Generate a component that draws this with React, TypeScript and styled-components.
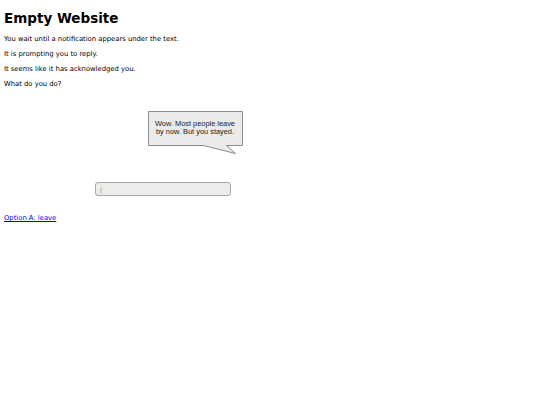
import React from "react";
import styled, { createGlobalStyle } from "styled-components";

const Global = createGlobalStyle`
  html, body { margin: 0; padding: 0; background: #ffffff; }
  body { font-family: "DejaVu Sans", Verdana, sans-serif; color: #000; }
`;

const Page = styled.div`
  padding: 4px 4px;
  display: flex;
  flex-direction: column;
`;

const Title = styled.h1`
  font-family: "DejaVu Sans", Verdana, sans-serif;
  font-weight: bold;
  font-size: 13.5px;
  line-height: 18px;
  margin: 5px 0 8px 0;
`;

const Line = styled.p`
  font-size: 6.8px;
  line-height: 8px;
  margin: 0 0 7px 0;
`;

const BubbleWrap = styled.div`
  margin: 16px 0 0 144px;
  width: 95px;
  height: 43px;
  position: relative;
`;

const BubbleBox = styled.div`
  position: relative;
  z-index: 1;
  width: 94px;
  height: 34px;
  box-sizing: border-box;
  display: flex;
  align-items: center;
  justify-content: center;
  text-align: center;
  font-family: "Liberation Sans", Arial, sans-serif;
  font-size: 7.4px;
  line-height: 8.5px;
  color: #1a1a1a;
  padding: 0 4px;
`;

const Tail = styled.svg`
  position: absolute;
  left: 0;
  top: 0;
`;

const InputField = styled.div`
  margin: 28px 0 0 91px;
  width: 136px;
  height: 14px;
  box-sizing: border-box;
  border: 1px solid #a8a8a8;
  border-radius: 3px;
  background: #ececec;
  display: flex;
  align-items: center;
  padding-left: 4px;
  font-size: 6px;
  color: #777;
`;

const Link = styled.a`
  margin-top: 18px;
  font-size: 6.8px;
  line-height: 8px;
  color: #0000ee;
  text-decoration: underline;
  align-self: flex-start;
`;

export default function App() {
  return (
    <>
      <Global />
      <Page>
        <Title>Empty Website</Title>
        <Line>You wait until a notification appears under the text.</Line>
        <Line>It is prompting you to reply.</Line>
        <Line>It seems like it has acknowledged you.</Line>
        <Line>What do you do?</Line>
        <BubbleWrap>
          <Tail width="95" height="43" viewBox="0 0 95 43">
            <path
              d="M0.5 0.5 H94.5 V34.5 H78.5 L87.5 42.5 L55.5 34.5 H0.5 Z"
              fill="#ebebeb"
              stroke="#8c8c8c"
              strokeWidth="1"
            />
          </Tail>
          <BubbleBox>Wow. Most people leave by now. But you stayed.</BubbleBox>
        </BubbleWrap>
        <InputField>|</InputField>
        <Link href="#">Option A: leave</Link>
      </Page>
    </>
  );
}
